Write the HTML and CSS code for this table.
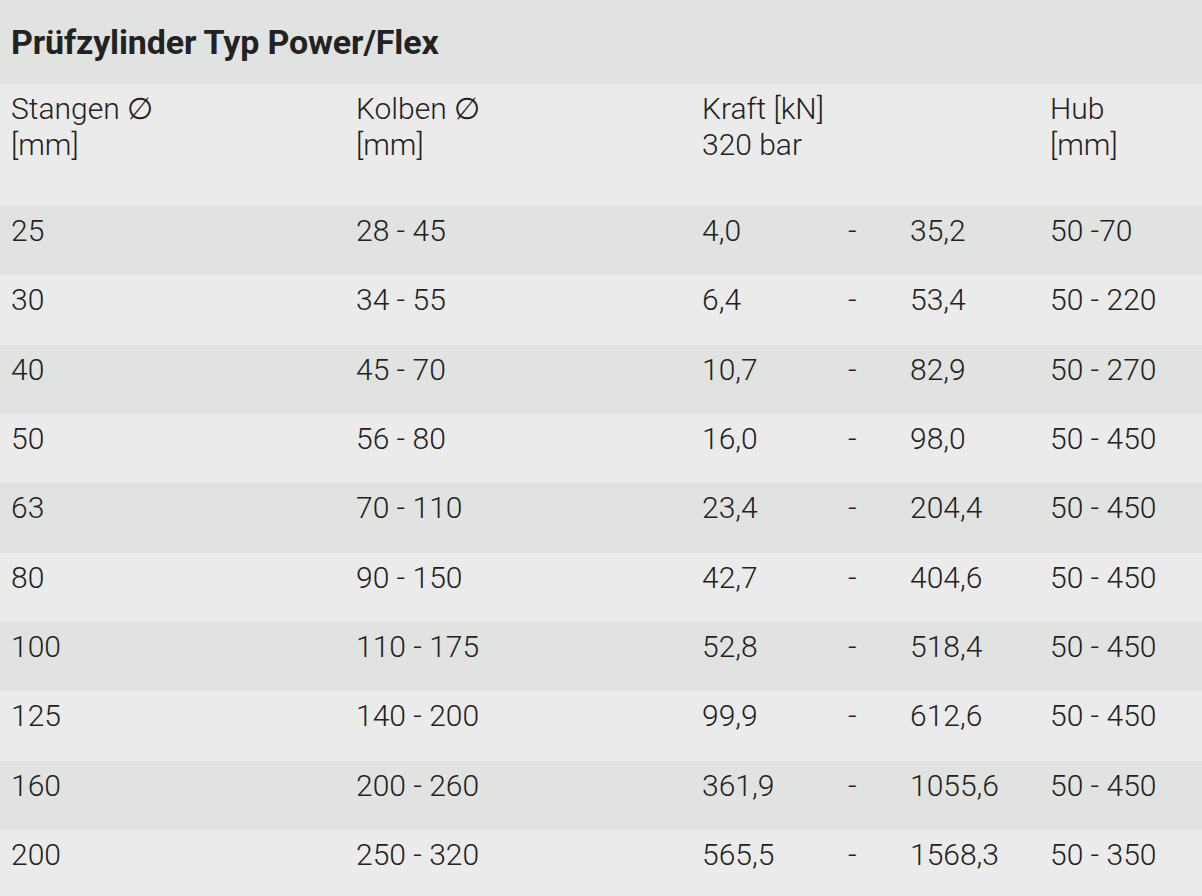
FILE: index.html
```html
<!DOCTYPE html>
<html lang="de">
<head>
<meta charset="utf-8">
<title>Prüfzylinder Typ Power/Flex</title>
<link rel="stylesheet" href="styles.css">
</head>
<body>
<div class="spec">
  <h1 class="spec-title">Prüfzylinder Typ Power/Flex</h1>
  <table class="spec-table">
    <colgroup>
      <col class="c1"><col class="c2"><col class="c3"><col class="c4"><col class="c5"><col class="c6">
    </colgroup>
    <thead>
      <tr class="head-row">
        <th>Stangen ∅<br>[mm]</th>
        <th>Kolben ∅<br>[mm]</th>
        <th colspan="3">Kraft [kN]<br>320 bar</th>
        <th>Hub<br>[mm]</th>
      </tr>
    </thead>
    <tbody>
      <tr><td>25</td><td>28 - 45</td><td>4,0</td><td>-</td><td>35,2</td><td>50 -70</td></tr>
      <tr><td>30</td><td>34 - 55</td><td>6,4</td><td>-</td><td>53,4</td><td>50 - 220</td></tr>
      <tr><td>40</td><td>45 - 70</td><td>10,7</td><td>-</td><td>82,9</td><td>50 - 270</td></tr>
      <tr><td>50</td><td>56 - 80</td><td>16,0</td><td>-</td><td>98,0</td><td>50 - 450</td></tr>
      <tr><td>63</td><td>70 - 110</td><td>23,4</td><td>-</td><td>204,4</td><td>50 - 450</td></tr>
      <tr><td>80</td><td>90 - 150</td><td>42,7</td><td>-</td><td>404,6</td><td>50 - 450</td></tr>
      <tr><td>100</td><td>110 - 175</td><td>52,8</td><td>-</td><td>518,4</td><td>50 - 450</td></tr>
      <tr><td>125</td><td>140 - 200</td><td>99,9</td><td>-</td><td>612,6</td><td>50 - 450</td></tr>
      <tr><td>160</td><td>200 - 260</td><td>361,9</td><td>-</td><td>1055,6</td><td>50 - 450</td></tr>
      <tr><td>200</td><td>250 - 320</td><td>565,5</td><td>-</td><td>1568,3</td><td>50 - 350</td></tr>
    </tbody>
  </table>
</div>
</body>
</html>
```
FILE: styles.css
```css
html, body {
  margin: 0;
  padding: 0;
  background: #ebebeb;
}
body {
  font-family: Roboto, "Liberation Sans", sans-serif;
  color: #222222;
}
.spec {
  width: 1202px;
}
.spec-title {
  margin: 0;
  height: 84px;
  box-sizing: border-box;
  display: flex;
  align-items: center;
  padding: 0 11px;
  background: #e1e3e0;
  font-size: 34px;
  font-weight: 700;
  letter-spacing: -0.15px;
  color: #222222;
}
.spec-table {
  width: 1202px;
  table-layout: fixed;
  border-collapse: collapse;
  border-spacing: 0;
}
.c1 { width: 346px; }
.c2 { width: 346px; }
.c3 { width: 146px; }
.c4 { width: 62px; }
.c5 { width: 140px; }
.c6 { width: 162px; }
.spec-table th,
.spec-table td {
  padding: 7px 0 0 10px;
  text-align: left;
  vertical-align: top;
  font-size: 30px;
  font-weight: 300;
  line-height: 36px;
  white-space: nowrap;
}
.spec-table th:first-child,
.spec-table td:first-child {
  padding-left: 11px;
}
.head-row th {
  height: 122px;
  box-sizing: border-box;
  background: #ebebeb;
}
.spec-table tbody td {
  height: 69.33px;
  box-sizing: border-box;
}
.spec-table tbody tr:nth-child(odd) td {
  background: #e1e3e0;
}
.spec-table tbody tr:nth-child(even) td {
  background: #ebebeb;
}
```
